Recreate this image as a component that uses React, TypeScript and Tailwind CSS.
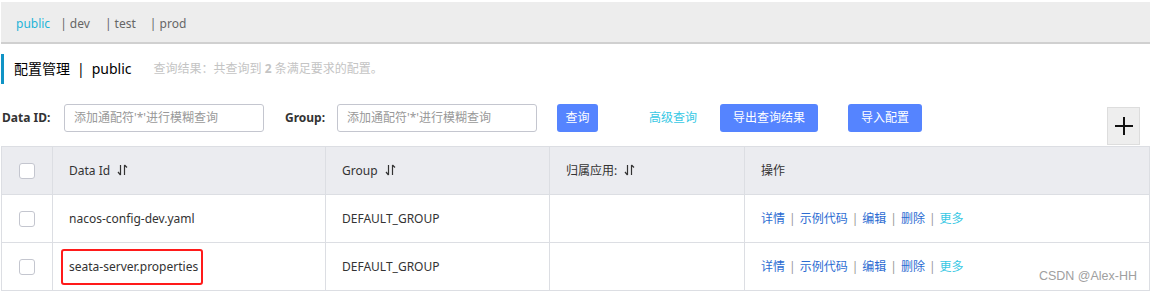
import React from "react";

const font = { fontFamily: '"Noto Sans", "Noto Sans CJK SC", sans-serif' };

function SortIcon() {
  return (
    <svg width="11" height="12" viewBox="0 0 11 12" className="inline-block ml-[7px] -mt-[2px]" fill="none" stroke="#333" strokeWidth="1.2">
      {/* down arrow */}
      <path d="M3.5 1v10M3.5 11L1 8" />
      {/* up arrow */}
      <path d="M7.5 11V1M7.5 1L10 3.5" />
    </svg>
  );
}

function Checkbox() {
  return <div className="w-4 h-4 rounded-[3px] border border-[#c4c6cf] bg-white mx-auto" />;
}

function Ops() {
  return (
    <div className="flex items-center text-xs">
      <span className="text-[#2c6cd2]">详情</span>
      <span className="text-[#999] mx-[4px]">|</span>
      <span className="text-[#2c6cd2]">示例代码</span>
      <span className="text-[#999] mx-[4px]">|</span>
      <span className="text-[#2c6cd2]">编辑</span>
      <span className="text-[#999] mx-[4px]">|</span>
      <span className="text-[#2c6cd2]">删除</span>
      <span className="text-[#999] mx-[4px]">|</span>
      <span className="text-[#37c8e4]">更多</span>
    </div>
  );
}

export default function App() {
  const rows = [
    { id: "nacos-config-dev.yaml", group: "DEFAULT_GROUP", marked: false },
    { id: "seata-server.properties", group: "DEFAULT_GROUP", marked: true },
  ];

  return (
    <div className="w-[1152px] h-[295px] bg-white overflow-hidden pt-[2px] pl-px pr-[2px] text-[#333]" style={font}>
      {/* namespace tabs */}
      <div className="h-[42px] bg-[#ededed] border-b-2 border-[#d0d0d0] flex items-center pl-[15px] pt-[4px] text-xs">
        <span className="text-[#1fb4d8]">public</span>
        <span className="ml-[10px] text-[#666]">| dev</span>
        <span className="ml-[15px] text-[#666]">| test</span>
        <span className="ml-[14px] text-[#666]">| prod</span>
      </div>

      {/* title */}
      <div className="mt-[10px] h-[30px] border-l-[3px] border-[#1093c5] flex items-center pl-[10px]">
        <span className="text-sm text-black">配置管理</span>
        <span className="text-sm text-black mx-[7px]">|</span>
        <span className="text-sm text-black">public</span>
        <span className="ml-[22px] text-xs text-[#c4c4c4]">
          查询结果：共查询到 <b className="font-bold">2</b> 条满足要求的配置。
        </span>
      </div>

      {/* filters */}
      <div className="mt-[20px] h-[42px] flex items-start">
        <div className="h-[28px] flex items-center">
          <span className="text-xs font-bold text-[#333] w-[63px] pl-px">Data ID:</span>
          <div className="w-[200px] h-[28px] border border-[#c4c6cf] rounded-[3px] flex items-center px-[9px] text-xs text-[#999]">
            添加通配符'*'进行模糊查询
          </div>
          <span className="ml-[21px] w-[52px] text-xs font-bold text-[#333]">Group:</span>
          <div className="w-[200px] h-[28px] border border-[#c4c6cf] rounded-[3px] flex items-center px-[9px] text-xs text-[#999]">
            添加通配符'*'进行模糊查询
          </div>
          <div className="ml-[20px] w-[41px] h-[28px] rounded-[3px] bg-[#5584ff] text-white text-xs flex items-center justify-center">查询</div>
          <span className="ml-[51px] text-xs text-[#37c8e4]">高级查询</span>
          <div className="ml-[23px] w-[98px] h-[28px] rounded-[3px] bg-[#5584ff] text-white text-xs flex items-center justify-center">导出查询结果</div>
          <div className="ml-[30px] w-[74px] h-[28px] rounded-[3px] bg-[#5584ff] text-white text-xs flex items-center justify-center">导入配置</div>
        </div>
        <div className="ml-auto mr-[10px] mt-[3px] w-[33px] h-[38px] bg-[#eeeeee] border border-[#dddddd] flex items-center justify-center">
          <svg width="20" height="20" viewBox="0 0 20 20" stroke="#111" strokeWidth="2">
            <path d="M10 1v18M1 10h18" />
          </svg>
        </div>
      </div>

      {/* table */}
      <table className="w-[1149px] border-collapse table-fixed text-xs">
        <colgroup>
          <col className="w-[51px]" />
          <col className="w-[273px]" />
          <col className="w-[224px]" />
          <col className="w-[195px]" />
          <col />
        </colgroup>
        <thead>
          <tr className="h-[48px] bg-[#ebecf0]">
            <th className="border border-[#dcdee3] font-normal"><Checkbox /></th>
            <th className="border border-[#dcdee3] font-normal text-left pl-[16px] text-[#333]">Data Id<SortIcon /></th>
            <th className="border border-[#dcdee3] font-normal text-left pl-[16px] text-[#333]">Group<SortIcon /></th>
            <th className="border border-[#dcdee3] font-normal text-left pl-[16px] text-[#333]">归属应用:<SortIcon /></th>
            <th className="border border-[#dcdee3] font-normal text-left pl-[16px] text-[#333]">操作</th>
          </tr>
        </thead>
        <tbody>
          {rows.map((r, i) => (
            <tr key={i} className="h-[48px]">
              <td className="border border-[#dcdee3]"><Checkbox /></td>
              <td className="border border-[#dcdee3] pl-[8px]">
                <div className={r.marked ? "w-[142px] h-[36px] flex items-center border-2 border-[#ff1a1a] rounded-[3px] pl-[6px] whitespace-nowrap" : "inline-block px-[8px]"}>
                  <span className="text-[#333]">{r.id}</span>
                </div>
              </td>
              <td className="border border-[#dcdee3] pl-[16px] text-[#333]">{r.group}</td>
              <td className="border border-[#dcdee3]" />
              <td className="border border-[#dcdee3] pl-[16px] relative">
                <Ops />
                {i === 1 && (
                  <span className="absolute right-[12px] bottom-[5px] text-[12.5px] text-[#a0a0a0]" style={{ fontFamily: '"Liberation Sans", sans-serif' }}>
                    CSDN @Alex-HH
                  </span>
                )}
              </td>
            </tr>
          ))}
        </tbody>
      </table>
    </div>
  );
}
